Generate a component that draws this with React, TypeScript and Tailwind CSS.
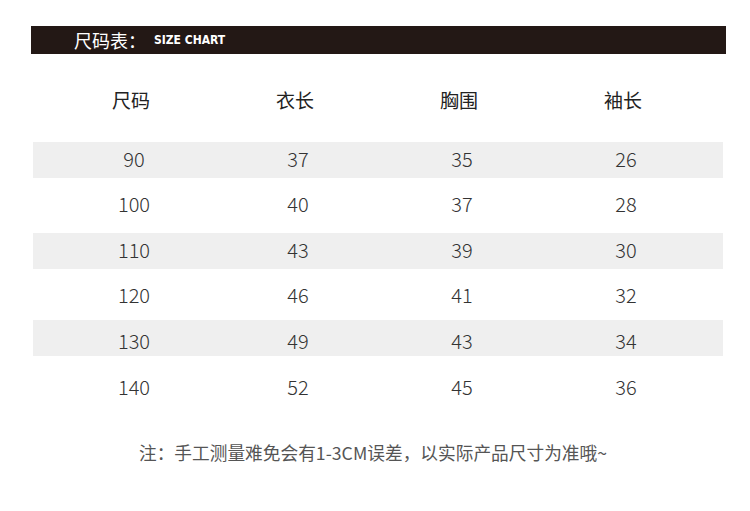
const rows = [
  ['90', '37', '35', '26'],
  ['100', '40', '37', '28'],
  ['110', '43', '39', '30'],
  ['120', '46', '41', '32'],
  ['130', '49', '43', '34'],
  ['140', '52', '45', '36'],
];

const heads = ['尺码', '衣长', '胸围', '袖长'];

const cjk = { fontFamily: '"Noto Sans CJK SC", "Noto Sans", sans-serif' };

export default function App() {
  return (
    <div className="w-[750px] h-[511px] bg-white pt-[26px]" style={cjk}>
      {/* title bar */}
      <div className="mx-[31px] w-[695px] h-[28px] bg-[#231815] flex items-center pl-[43px]">
        <span className="text-white text-[18px] leading-none">尺码表：</span>
        <span
          className="ml-[8px] text-white text-[12px] font-bold leading-none"
          style={{ fontFamily: '"DejaVu Sans Condensed", "Liberation Sans", sans-serif' }}
        >
          SIZE CHART
        </span>
      </div>

      <div className="ml-[33px] w-[690px]">
        {/* column heads */}
        <div className="h-[83px] pt-[10px] grid grid-cols-4 items-center pl-[16px] pr-[18px]">
          {heads.map(h => (
            <div key={h} className="text-center text-[19px] text-[#222]">
              {h}
            </div>
          ))}
        </div>

        {/* data rows */}
        {rows.map((r, i) => (
          <div key={r[0]} className={i === 4 ? 'pt-[1px] pb-[9.5px]' : 'py-[5px]'}>
            <div
              className={
                'h-[35.5px] grid grid-cols-4 items-center pl-[19px] pr-[15px] ' +
                (i % 2 === 0 ? 'bg-[#efefef]' : 'bg-white')
              }
            >
              {r.map((v, j) => (
                <div
                  key={j}
                  className={
                    'text-center text-[20px] font-light text-[#333] leading-none ' +
                    (i === 4 ? 'translate-y-[3px]' : '-translate-y-[1px]')
                  }
                >
                  {v}
                </div>
              ))}
            </div>
          </div>
        ))}
      </div>

      <p className="mt-[29px] text-center text-[17.7px] leading-[24px] text-[#555] pr-[4px]">
        注：手工测量难免会有1-3CM误差，以实际产品尺寸为准哦~
      </p>
    </div>
  );
}
